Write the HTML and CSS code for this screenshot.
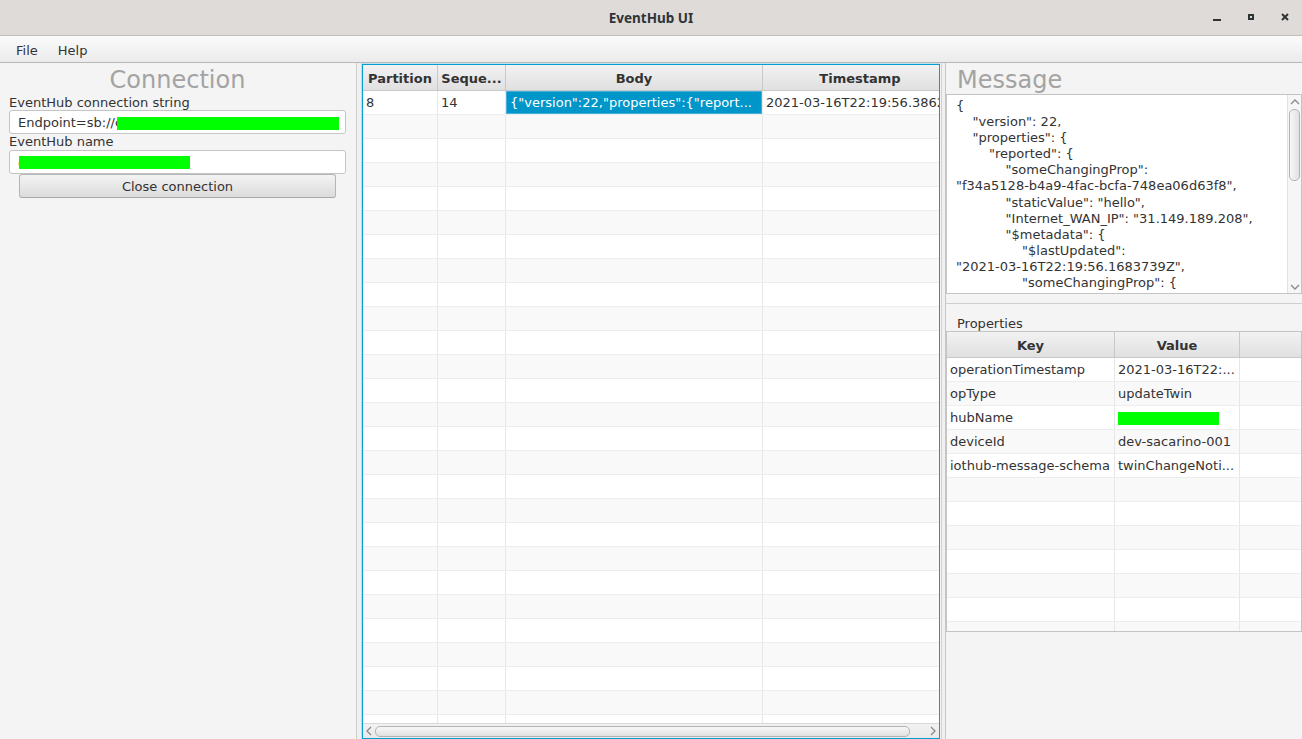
FILE: index.html
```html
<!DOCTYPE html>
<html lang="en">
<head>
<meta charset="utf-8">
<title>EventHub UI</title>
<link rel="stylesheet" href="styles.css">
</head>
<body>
<div class="window">
  <header class="titlebar">
    <div class="tb-side"></div>
    <div class="tb-title">EventHub UI</div>
    <div class="tb-controls">
      <svg class="wc" width="34" height="35" viewBox="0 0 34 35"><rect x="13" y="19" width="8" height="2" fill="#2e3436"/></svg>
      <svg class="wc" width="34" height="35" viewBox="0 0 34 35"><rect x="15" y="15" width="4" height="4" fill="none" stroke="#2e3436" stroke-width="2"/></svg>
      <svg class="wc" width="34" height="35" viewBox="0 0 34 35"><path d="M14 14 L20 20 M20 14 L14 20" stroke="#2e3436" stroke-width="2" fill="none"/></svg>
    </div>
  </header>
  <nav class="menubar"><span class="menu">File</span><span class="menu">Help</span></nav>
  <main class="main">
    <section class="left">
      <h1 class="pane-title">Connection</h1>
      <div class="lbl">EventHub connection string</div>
      <div class="field"><span class="ftext">Endpoint=sb://</span><span class="peek">c</span><span class="redact r1"></span></div>
      <div class="lbl lbl2">EventHub name</div>
      <div class="field"><span class="peek orange">c</span><span class="redact r2"></span></div>
      <button class="btn">Close connection</button>
    </section>
    <div class="divider1"></div>
    <section class="center">
      <div class="tbl-head">
        <div class="th">Partition</div>
        <div class="th">Seque...</div>
        <div class="th">Body</div>
        <div class="th">Timestamp</div>
      </div>
      <div class="tbl-body">
        <div class="row"><div class="td">8</div><div class="td">14</div><div class="td sel">{"version":22,"properties":{"report...</div><div class="td">2021-03-16T22:19:56.386288Z</div></div>
        <div class="row"><div class="td"></div><div class="td"></div><div class="td"></div><div class="td"></div></div>
        <div class="row"><div class="td"></div><div class="td"></div><div class="td"></div><div class="td"></div></div>
        <div class="row"><div class="td"></div><div class="td"></div><div class="td"></div><div class="td"></div></div>
        <div class="row"><div class="td"></div><div class="td"></div><div class="td"></div><div class="td"></div></div>
        <div class="row"><div class="td"></div><div class="td"></div><div class="td"></div><div class="td"></div></div>
        <div class="row"><div class="td"></div><div class="td"></div><div class="td"></div><div class="td"></div></div>
        <div class="row"><div class="td"></div><div class="td"></div><div class="td"></div><div class="td"></div></div>
        <div class="row"><div class="td"></div><div class="td"></div><div class="td"></div><div class="td"></div></div>
        <div class="row"><div class="td"></div><div class="td"></div><div class="td"></div><div class="td"></div></div>
        <div class="row"><div class="td"></div><div class="td"></div><div class="td"></div><div class="td"></div></div>
        <div class="row"><div class="td"></div><div class="td"></div><div class="td"></div><div class="td"></div></div>
        <div class="row"><div class="td"></div><div class="td"></div><div class="td"></div><div class="td"></div></div>
        <div class="row"><div class="td"></div><div class="td"></div><div class="td"></div><div class="td"></div></div>
        <div class="row"><div class="td"></div><div class="td"></div><div class="td"></div><div class="td"></div></div>
        <div class="row"><div class="td"></div><div class="td"></div><div class="td"></div><div class="td"></div></div>
        <div class="row"><div class="td"></div><div class="td"></div><div class="td"></div><div class="td"></div></div>
        <div class="row"><div class="td"></div><div class="td"></div><div class="td"></div><div class="td"></div></div>
        <div class="row"><div class="td"></div><div class="td"></div><div class="td"></div><div class="td"></div></div>
        <div class="row"><div class="td"></div><div class="td"></div><div class="td"></div><div class="td"></div></div>
        <div class="row"><div class="td"></div><div class="td"></div><div class="td"></div><div class="td"></div></div>
        <div class="row"><div class="td"></div><div class="td"></div><div class="td"></div><div class="td"></div></div>
        <div class="row"><div class="td"></div><div class="td"></div><div class="td"></div><div class="td"></div></div>
        <div class="row"><div class="td"></div><div class="td"></div><div class="td"></div><div class="td"></div></div>
        <div class="row"><div class="td"></div><div class="td"></div><div class="td"></div><div class="td"></div></div>
        <div class="row"><div class="td"></div><div class="td"></div><div class="td"></div><div class="td"></div></div>
        <div class="row"><div class="td"></div><div class="td"></div><div class="td"></div><div class="td"></div></div>
      </div>
      <div class="hscroll">
        <div class="sb-arrow h"><svg width="8" height="10" viewBox="0 0 8 10"><path d="M6 1 L2 5 L6 9" fill="none" stroke="#8a8a8a" stroke-width="1.3"/></svg></div>
        <div class="hthumb"></div>
        <div class="sb-space"></div>
        <div class="sb-arrow h"><svg width="8" height="10" viewBox="0 0 8 10"><path d="M2 1 L6 5 L2 9" fill="none" stroke="#8a8a8a" stroke-width="1.3"/></svg></div>
      </div>
    </section>
    <div class="divider2"></div>
    <section class="right">
      <h2 class="pane-title">Message</h2>
      <div class="textarea">
<pre class="ta-text">{
    "version": 22,
    "properties": {
        "reported": {
            "someChangingProp":
"f34a5128-b4a9-4fac-bcfa-748ea06d63f8",
            "staticValue": "hello",
            "Internet_WAN_IP": "31.149.189.208",
            "$metadata": {
                "$lastUpdated":
"2021-03-16T22:19:56.1683739Z",
                "someChangingProp": {</pre>
        <div class="vscroll">
          <div class="sb-arrow v"><svg width="10" height="8" viewBox="0 0 10 8"><path d="M1 6 L5 2 L9 6" fill="none" stroke="#8a8a8a" stroke-width="1.3"/></svg></div>
          <div class="vthumb"></div>
          <div class="sb-space"></div>
          <div class="sb-arrow v"><svg width="10" height="8" viewBox="0 0 10 8"><path d="M1 2 L5 6 L9 2" fill="none" stroke="#8a8a8a" stroke-width="1.3"/></svg></div>
        </div>
      </div>
      <div class="hsplit"></div>
      <div class="props-lbl">Properties</div>
      <div class="ptable">
        <div class="tbl-head">
          <div class="th">Key</div>
          <div class="th">Value</div>
          <div class="th"></div>
        </div>
        <div class="tbl-body">
          <div class="row"><div class="td">operationTimestamp</div><div class="td">2021-03-16T22:...</div><div class="td"></div></div>
          <div class="row"><div class="td">opType</div><div class="td">updateTwin</div><div class="td"></div></div>
          <div class="row"><div class="td">hubName</div><div class="td"><span class="redact r3"></span></div><div class="td"></div></div>
          <div class="row"><div class="td">deviceId</div><div class="td">dev-sacarino-001</div><div class="td"></div></div>
          <div class="row"><div class="td">iothub-message-schema</div><div class="td">twinChangeNoti...</div><div class="td"></div></div>
          <div class="row"><div class="td"></div><div class="td"></div><div class="td"></div></div>
          <div class="row"><div class="td"></div><div class="td"></div><div class="td"></div></div>
          <div class="row"><div class="td"></div><div class="td"></div><div class="td"></div></div>
          <div class="row"><div class="td"></div><div class="td"></div><div class="td"></div></div>
          <div class="row"><div class="td"></div><div class="td"></div><div class="td"></div></div>
          <div class="row"><div class="td"></div><div class="td"></div><div class="td"></div></div>
          <div class="row"><div class="td"></div><div class="td"></div><div class="td"></div></div>
        </div>
      </div>
    </section>
  </main>
</div>
</body>
</html>
```
FILE: styles.css
```css
* { box-sizing: border-box; }
html, body { margin: 0; padding: 0; }
body {
  width: 1302px; height: 739px; overflow: hidden;
  background: #f4f4f4;
  font-family: "DejaVu Sans", "Liberation Sans", sans-serif;
  font-size: 13px; color: #333;
}
.window { display: flex; flex-direction: column; height: 739px; }

/* title bar */
.titlebar {
  flex: none; height: 36px;
  display: grid; grid-template-columns: 1fr auto 1fr; align-items: center;
  background: #dfdbd8; border-bottom: 1px solid #c3beb9;
}
.tb-title { font-family: "Noto Sans", sans-serif; font-weight: 700; font-size: 13.5px; color: #2e3436; line-height: 18px; padding-top: 1px; }
.tb-controls { justify-self: end; display: flex; height: 35px; }
.wc { display: block; }

/* menu bar */
.menubar {
  flex: none; height: 27px; display: flex; padding-left: 6px;
  background: linear-gradient(#fbfbfb, #ebebeb);
  border-bottom: 1px solid #b8b8b8;
}
.menu { padding: 3px 10px 0; line-height: 23px; }

.main { flex: 1; display: flex; min-height: 0; }

/* left pane */
.left {
  width: 357px; flex: none; display: flex; flex-direction: column;
  padding: 0 10px 0 9px; border-right: 1px solid #cdcdcd; background: #f4f4f4;
}
.pane-title { margin: 0; font-weight: normal; font-size: 24px; color: #a3a3a3; white-space: nowrap; }
.left .pane-title { height: 33px; line-height: 35px; text-align: center; overflow: hidden; }
.lbl { height: 14px; line-height: 14px; white-space: nowrap; }
.lbl2 { height: 16px; line-height: 16px; }
.field {
  height: 24px; flex: none; display: flex; align-items: flex-start;
  padding: 1px 8px 0; background: #fff; border: 1px solid #c5c5c5; border-radius: 3px;
  overflow: hidden; white-space: nowrap; line-height: 22px;
}
.ftext { flex: none; }
.peek { flex: none; width: 2px; overflow: hidden; color: #333; }
.peek.orange { width: 1px; color: #f08a24; }
.redact { display: block; flex: none; background: #00ff00; height: 13px; }
.r1 { width: 222px; margin-top: 5px; }
.r2 { width: 171px; margin-top: 4px; }
.r3 { width: 101px; margin-top: 6px; }
.btn {
  margin: 0 10px; height: 24px; padding: 1px 0 0;
  border: 1px solid #b5b5b5; border-bottom-color: #a9a9a9; border-radius: 3px;
  background: linear-gradient(#f3f3f3, #dcdcdc);
  font: inherit; color: #333; line-height: 21px; text-align: center;
}

/* dividers */
.divider1 { width: 5px; flex: none; background: #f0f0f0; }
.divider2 {
  width: 6px; flex: none;
  background: linear-gradient(to right, #f4f4f4 0 1px, #d2d2d2 1px 2px, #f0f0f0 2px 5px, #c6c6c6 5px 6px);
}

/* tables */
.center {
  width: 578px; flex: none; margin-top: 1px; height: 675px;
  border: 1px solid #039ed3; box-shadow: 0 0 0 1px rgba(3, 158, 211, 0.22);
  background: #fff; display: flex; flex-direction: column; overflow: hidden;
}
.tbl-head {
  display: grid; flex: none; height: 26px;
  border-bottom: 1px solid #c8c8c8;
  background: linear-gradient(#f2f2f2, #e0e0e0);
}
.th {
  border-right: 1px solid #c8c8c8; font-weight: bold; text-align: center;
  line-height: 27px; white-space: nowrap; overflow: hidden;
}
.tbl-body { flex: 1; overflow: hidden; min-height: 0; }
.row { display: grid; height: 24px; border-bottom: 1px solid #ededed; background: #fff; }
.row:nth-child(even) { background: #f9f9f9; }
.td { border-right: 1px solid #e7e7e7; padding-left: 3px; line-height: 24px; white-space: nowrap; overflow: hidden; }
.td.sel { background: #0096c9; color: #fff; padding-left: 4px; box-shadow: inset 0 0 0 1px #45b0da; }
.center .tbl-head, .center .row { grid-template-columns: 75px 68px 257px 195px; width: 595px; }

.hscroll {
  flex: none; height: 15px; display: flex; align-items: center;
  background: linear-gradient(#f2f2f2, #e9e9e9); border-top: 1px solid #d9d9d9;
}
.sb-arrow { flex: none; display: flex; align-items: center; justify-content: center; }
.sb-arrow svg { display: block; }
.sb-arrow.h { width: 12px; height: 13px; }
.sb-arrow.v { height: 13px; width: 100%; }
.hthumb {
  flex: none; width: 535px; height: 11px;
  border: 1px solid #b3b3b3; border-radius: 5px;
  background: linear-gradient(#f7f7f7, #e1e1e1);
}
.sb-space { flex: 1; }

/* right pane */
.right { flex: 1; display: flex; flex-direction: column; min-width: 0; }
.right .pane-title { height: 31px; line-height: 34px; padding-left: 11px; flex: none; overflow: hidden; }
.textarea { flex: none; height: 200px; display: flex; background: #fff; border: 1px solid #c4c4c4; overflow: hidden; }
.ta-text {
  flex: 1; min-width: 0; margin: 0; padding: 3px 0 0 9px;
  font: inherit; line-height: 16.1px; white-space: pre; overflow: hidden; color: #333;
}
.vscroll {
  width: 14px; flex: none; display: flex; flex-direction: column; align-items: center;
  border-left: 1px solid #e2e2e2; background: #f6f6f6;
}
.vthumb {
  flex: none; width: 11px; height: 72px; margin-top: 1px;
  border: 1px solid #b3b3b3; border-radius: 5px;
  background: linear-gradient(to right, #f7f7f7, #e1e1e1);
}
.hsplit { height: 10px; flex: none; border-bottom: 1px solid #cfcfcf; }
.props-lbl { height: 27px; flex: none; padding: 12px 0 0 11px; line-height: 15px; }
.ptable {
  height: 301px; flex: none; border: 1px solid #c4c4c4; background: #fff;
  display: flex; flex-direction: column; overflow: hidden;
}
.ptable .tbl-head, .ptable .row { grid-template-columns: 168px 125px 1fr; }
.ptable .th:last-child, .ptable .td:last-child { border-right: none; }
```
